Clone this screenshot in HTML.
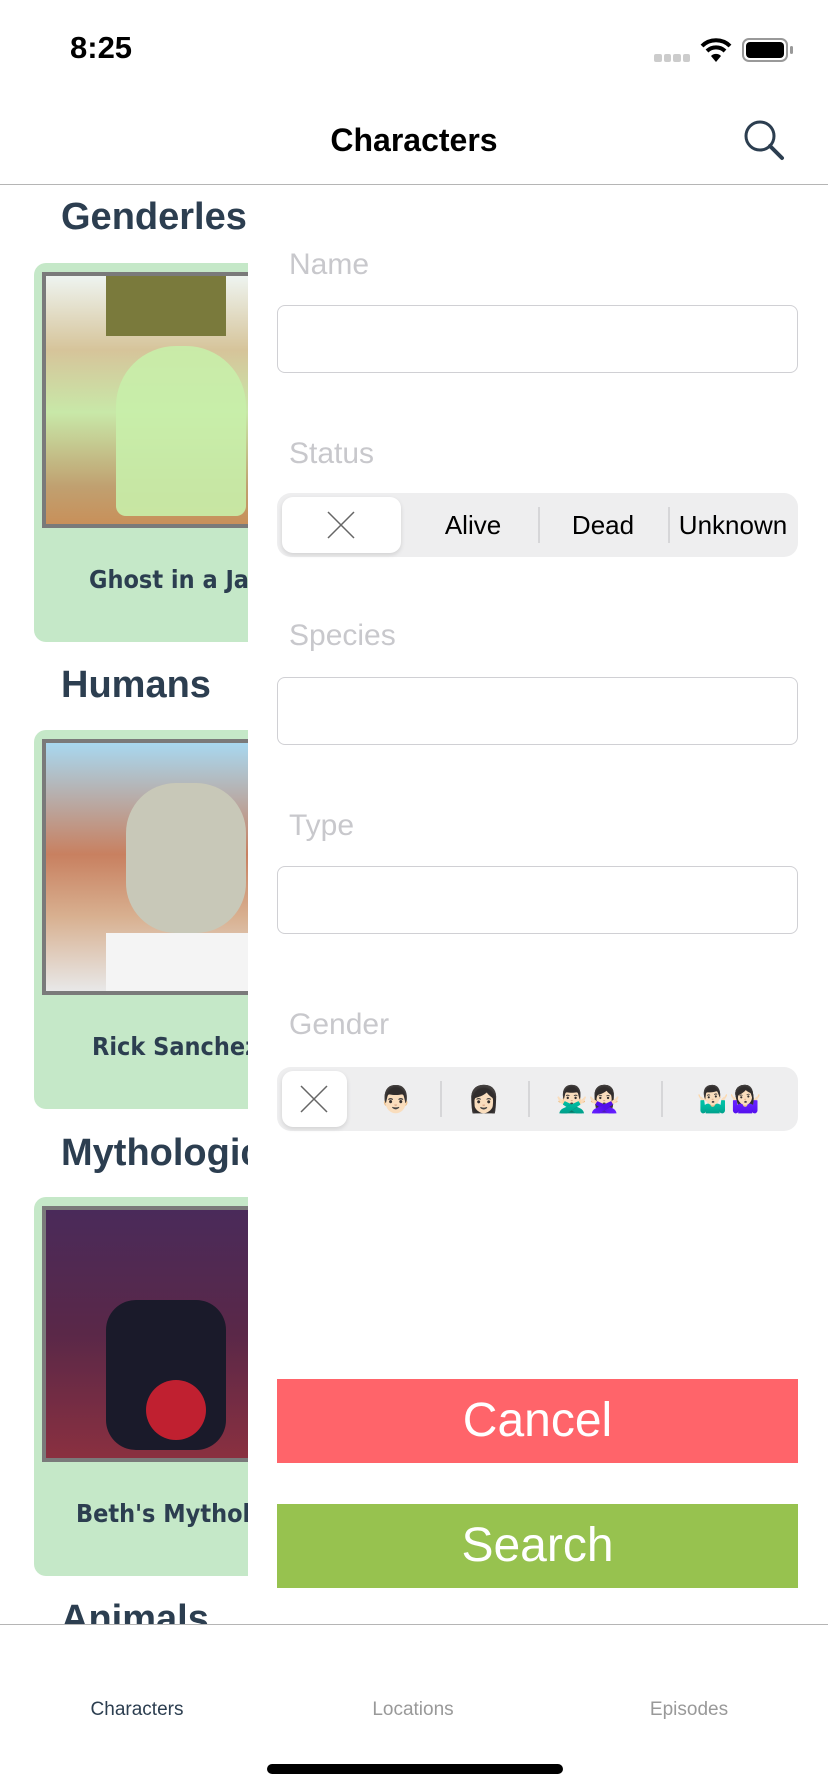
<!DOCTYPE html>
<html><head><meta charset="utf-8"><style>
*{margin:0;padding:0;box-sizing:border-box}
body{width:828px;height:1792px;position:relative;overflow:hidden;background:#fff;font-family:"Liberation Sans",sans-serif}
.abs{position:absolute}
.h{position:absolute;left:61px;font-size:38px;font-weight:bold;color:#2c3e50;white-space:nowrap}
.card{position:absolute;left:34px;width:240px;height:379px;background:#c5e8c8;border-radius:12px}
.img{position:absolute;left:8px;top:9px;width:240px;height:256px;border:4px solid #7a7a7a;overflow:hidden}
.cap{position:absolute;left:0;width:240px;top:302px;font-family:"DejaVu Sans Condensed","Liberation Sans Narrow",sans-serif;font-weight:bold;font-size:25px;color:#2c3e50;white-space:nowrap;padding-left:55px;text-align:left}
.panel{position:absolute;left:248px;top:185px;width:580px;height:1438px;background:#fff;z-index:2}
.lbl{position:absolute;left:41px;font-size:30px;color:#c8c8cc}
.inp{position:absolute;left:29px;width:521px;height:68px;border:1px solid #d0d0d4;border-radius:8px}
.seg{position:absolute;left:29px;width:521px;height:64px;background:#eeeeef;border-radius:14px}
.sel{position:absolute;top:4px;height:56px;background:#fff;border-radius:11px;box-shadow:0 2px 5px rgba(0,0,0,.12)}
.si{position:absolute;top:0;height:64px;line-height:64px;font-size:26px;color:#000;transform:translateX(-50%);white-space:nowrap}
.sep{position:absolute;top:14px;width:2px;height:36px;background:#d6d6d8}
.btn{position:absolute;left:29px;width:521px;height:84px;color:#fff;font-size:48px;text-align:center;line-height:84px}
.tab{position:absolute;top:1699px;font-size:19px;transform:translateX(-50%);color:#999}
</style></head><body>
<div class="abs" style="left:70px;top:30px;font-size:31px;font-weight:bold">8:25</div>
<div class="abs" style="left:654px;top:54px;width:36px;height:8px;display:flex;gap:2px"><i style="flex:1;background:#ccc;border-radius:2px"></i><i style="flex:1;background:#ccc;border-radius:2px"></i><i style="flex:1;background:#ccc;border-radius:2px"></i><i style="flex:1;background:#ccc;border-radius:2px"></i></div>
<svg class="abs" style="left:700px;top:36px" width="32" height="28" viewBox="0 0 32 28"><path d="M2 10 A20 20 0 0 1 30 10" stroke="#000" stroke-width="4" fill="none"/><path d="M7 15 A13 13 0 0 1 25 15" stroke="#000" stroke-width="4" fill="none"/><path d="M11 20 A7 7 0 0 1 21 20 L16 26Z" fill="#000"/></svg>
<div class="abs" style="left:742px;top:38px;width:46px;height:24px;border:2px solid #999;border-radius:7px;padding:2px"><div style="width:100%;height:100%;background:#000;border-radius:4px"></div></div>
<div class="abs" style="left:790px;top:46px;width:3px;height:8px;background:#999;border-radius:2px"></div>
<div class="abs" style="left:0;width:828px;top:122px;text-align:center;font-size:32px;font-weight:bold">Characters</div>
<svg class="abs" style="left:742px;top:118px" width="44" height="44" viewBox="0 0 44 44"><circle cx="18" cy="18" r="14" stroke="#2c3e50" stroke-width="3" fill="none"/><path d="M28 28 L40 40" stroke="#2c3e50" stroke-width="4" stroke-linecap="round"/></svg>
<div class="abs" style="left:0;top:184px;width:828px;height:1px;background:#b5b5b5"></div>

<div class="h" style="top:196px">Genderless</div>
<div class="card" style="top:263px"><div class="img" style="background:linear-gradient(180deg,#eef4f0 0%,#d6c49a 30%,#c8e8a8 55%,#c0a070 85%,#c8905a 100%)">
<div class="abs" style="left:60px;top:0;width:120px;height:60px;background:#7a7a3c"></div>
<div class="abs" style="left:70px;top:70px;width:130px;height:170px;background:#c8eeaa;border-radius:60px 60px 10px 10px;opacity:.9"></div>
</div><div class="cap">Ghost in a Jar</div></div>

<div class="h" style="top:664px">Humans</div>
<div class="card" style="top:730px"><div class="img" style="background:linear-gradient(180deg,#a8d8f0 0%,#c88060 45%,#d8b090 70%,#e8e8e8 100%)">
<div class="abs" style="left:80px;top:40px;width:120px;height:150px;background:#c8c8b8;border-radius:50px"></div>
<div class="abs" style="left:60px;top:190px;width:160px;height:60px;background:#f4f4f4"></div>
</div><div class="cap" style="padding-left:58px">Rick Sanchez</div></div>

<div class="h" style="top:1132px">Mythological</div>
<div class="card" style="top:1197px"><div class="img" style="background:linear-gradient(180deg,#4a2a5a 0%,#5a2848 50%,#8a3040 100%)">
<div class="abs" style="left:60px;top:90px;width:120px;height:150px;background:#1a1a2a;border-radius:30px"></div>
<div class="abs" style="left:100px;top:170px;width:60px;height:60px;background:#c02030;border-radius:50%"></div>
</div><div class="cap" style="padding-left:42px">Beth's Mythological</div></div>

<div class="h" style="top:1598px">Animals</div>

<div class="panel">
<div class="lbl" style="top:63px">Name</div>
<div class="inp" style="top:120px"></div>
<div class="lbl" style="top:252px">Status</div>
<div class="seg" style="top:308px">
<div class="sel" style="left:5px;width:119px"><svg style="position:absolute;left:45px;top:14px" width="28" height="28"><path d="M1 1L27 27M27 1L1 27" stroke="#666" stroke-width="1.5"/></svg></div>
<div class="si" style="left:196px">Alive</div><div class="sep" style="left:261px"></div>
<div class="si" style="left:326px">Dead</div><div class="sep" style="left:391px"></div>
<div class="si" style="left:456px">Unknown</div>
</div>
<div class="lbl" style="top:434px">Species</div>
<div class="inp" style="top:492px"></div>
<div class="lbl" style="top:624px">Type</div>
<div class="inp" style="top:681px"></div>
<div class="lbl" style="top:823px">Gender</div>
<div class="seg" style="top:882px">
<div class="sel" style="left:5px;width:65px"><svg style="position:absolute;left:18px;top:14px" width="28" height="28"><path d="M1 1L27 27M27 1L1 27" stroke="#666" stroke-width="1.5"/></svg></div>
<div class="si" style="left:119px;font-size:26px">👨🏻</div><div class="sep" style="left:163px"></div>
<div class="si" style="left:207px;font-size:26px">👩🏻</div><div class="sep" style="left:251px"></div>
<div class="si" style="left:311px;font-size:26px">🙅🏻‍♂️🙅🏻‍♀️</div><div class="sep" style="left:384px"></div>
<div class="si" style="left:452px;font-size:26px">🤷🏻‍♂️🤷🏻‍♀️</div>
</div>
<div class="btn" style="top:1194px;background:#ff646a">Cancel</div>
<div class="btn" style="top:1319px;background:#97c24f">Search</div>
</div>

<div class="abs" style="left:0;top:1624px;width:828px;height:168px;background:#fff;border-top:1px solid #b5b5b5;z-index:3"></div>
<div class="tab" style="left:137px;color:#2c3e50;z-index:4">Characters</div>
<div class="tab" style="left:413px;z-index:4">Locations</div>
<div class="tab" style="left:689px;z-index:4">Episodes</div>
<div class="abs" style="left:267px;top:1764px;width:296px;height:10px;background:#000;border-radius:5px;z-index:4"></div>
</body></html>
